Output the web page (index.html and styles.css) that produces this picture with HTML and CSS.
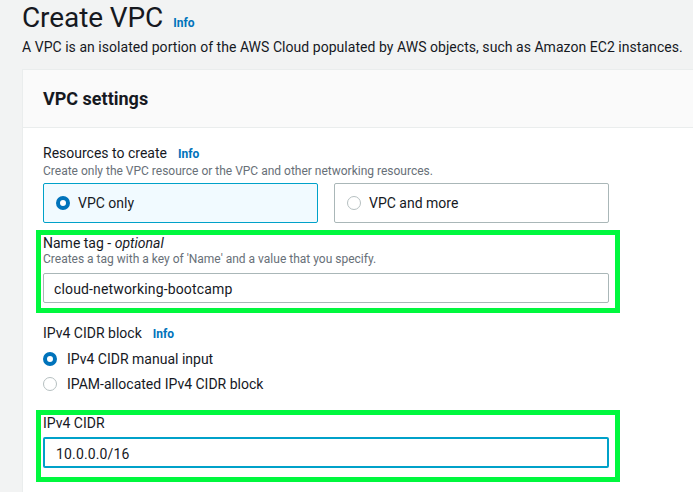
FILE: index.html
```html
<!DOCTYPE html>
<html lang="en">
<head>
<meta charset="utf-8">
<title>Create VPC</title>
<link rel="stylesheet" href="styles.css">
</head>
<body>
<div class="page">
  <header class="page-head">
    <h1 class="title">Create VPC<a class="info info-title">Info</a></h1>
    <p class="desc">A VPC is an isolated portion of the AWS Cloud populated by AWS objects, such as Amazon EC2 instances.</p>
  </header>

  <section class="card">
    <div class="card-head">
      <h2 class="card-title">VPC settings</h2>
    </div>
    <div class="card-body">
      <div class="field">
        <div class="label">Resources to create<a class="info">Info</a></div>
        <div class="hint">Create only the VPC resource or the VPC and other networking resources.</div>
        <div class="tiles">
          <div class="tile tile-on"><span class="radio radio-on"></span><span>VPC only</span></div>
          <div class="tile"><span class="radio"></span><span>VPC and more</span></div>
        </div>
      </div>

      <div class="mark mark-name">
        <div class="label label-tight">Name tag - <em>optional</em></div>
        <div class="hint">Creates a tag with a key of 'Name' and a value that you specify.</div>
        <div class="input">cloud-networking-bootcamp</div>
      </div>

      <div class="field field-cidr">
        <div class="label">IPv4 CIDR block<a class="info">Info</a></div>
        <div class="radios">
          <div class="radio-row"><span class="radio radio-on"></span><span>IPv4 CIDR manual input</span></div>
          <div class="radio-row"><span class="radio"></span><span>IPAM-allocated IPv4 CIDR block</span></div>
        </div>
      </div>

      <div class="mark mark-cidr">
        <div class="label label-tight">IPv4 CIDR</div>
        <div class="input input-focus">10.0.0.0/16</div>
      </div>
    </div>
  </section>
</div>
</body>
</html>
```

FILE: styles.css
```css
* { box-sizing: border-box; }

html, body {
  margin: 0;
  padding: 0;
  background: #f2f3f3;
  overflow: hidden;
}

body {
  font-family: Roboto, "Liberation Sans", sans-serif;
  color: #16191f;
  font-size: 14px;
}

.page {
  height: 492px;
  overflow: hidden;
  padding: 0 0 0 22px;
  display: flex;
  flex-direction: column;
}

.page-head {
  padding-top: 1px;
}

.title {
  margin: 0;
  font-size: 28px;
  font-weight: 400;
  line-height: 34px;
  letter-spacing: -0.1px;
}

.info {
  color: #0073bb;
  font-size: 12px;
  font-weight: 700;
  line-height: 14px;
  text-decoration: none;
  margin-left: 11px;
  letter-spacing: 0;
}

.info-title {
  margin-left: 10px;
}

.desc {
  margin: 2px 0 0;
  font-size: 14px;
  line-height: 20px;
  letter-spacing: 0.04px;
}

.card {
  margin-top: 12px;
  margin-right: -4px;
  background: #ffffff;
  border: 1px solid #eaeded;
  border-right: none;
  border-bottom: none;
  flex: 1;
}

.card-head {
  background: #fafafa;
  border-bottom: 1px solid #eaeded;
  height: 58px;
  padding: 0 20px;
  display: flex;
  align-items: center;
}

.card-title {
  margin: 0;
  font-size: 18px;
  font-weight: 700;
  line-height: 22px;
}

.card-body {
  padding: 15px 20px 0 20px;
  width: 606px;
}

.label {
  font-size: 14px;
  line-height: 20px;
}

.label-tight {
  line-height: 16px;
}

.label em {
  font-style: italic;
}

.hint {
  font-size: 12px;
  line-height: 16px;
  color: #687078;
}

.tiles {
  margin-top: 4px;
  display: grid;
  grid-template-columns: 1fr 1fr;
  gap: 16px;
}

.tile {
  height: 40px;
  border: 1px solid #aab7b8;
  border-radius: 2px;
  background: #ffffff;
  display: flex;
  align-items: center;
  gap: 8px;
  padding-left: 12px;
  font-size: 14px;
}

.tile-on {
  background: #f1faff;
  border-color: #00a1c9;
}

.radio {
  width: 14px;
  height: 14px;
  border-radius: 50%;
  border: 1.5px solid #b6c0c1;
  background: #fff;
  flex: none;
}

.radio-on {
  border: 4px solid #0073bb;
}

.mark {
  margin: 7px -11px 0 -7px;
  border: 5px solid #00f83e;
  padding: 0 6px 5px 2px;
}

.input {
  height: 30px;
  border: 1px solid #aab7b8;
  border-radius: 2px;
  background: #fff;
  display: flex;
  align-items: center;
  padding: 2px 0 0 10px;
  font-size: 14px;
  margin-top: 6px;
  letter-spacing: 0.15px;
}

.input-focus {
  height: 31px;
  border: 2px solid #00a1c9;
  padding-left: 11px;
}

.field-cidr {
  margin-top: 10px;
}

.radios {
  margin-top: 3px;
}

.radio-row {
  height: 25px;
  display: flex;
  align-items: center;
  gap: 10px;
}

.mark-cidr {
  margin-top: 14px;
  padding-bottom: 9px;
}
```
